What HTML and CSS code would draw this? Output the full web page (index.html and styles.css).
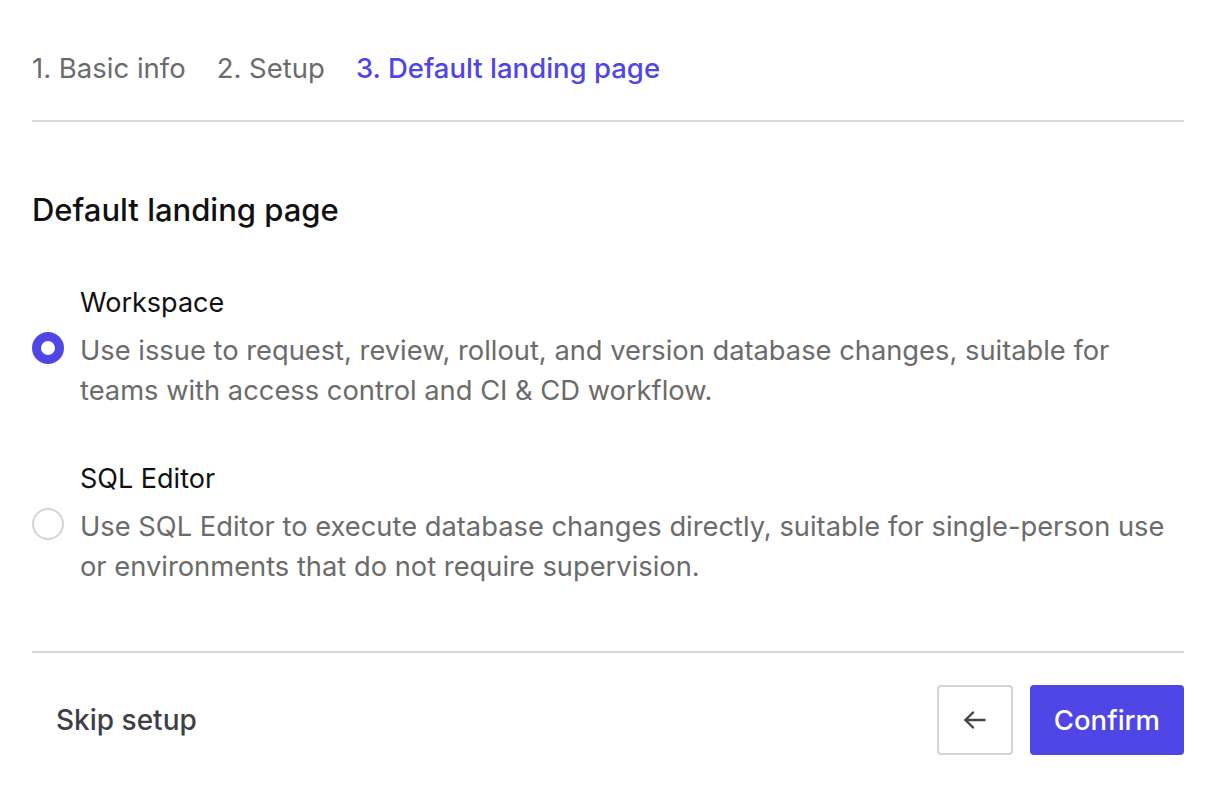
FILE: index.html
```html
<!DOCTYPE html>
<html lang="en">
<head>
  <meta charset="UTF-8">
  <title>Default landing page</title>
  <link rel="stylesheet" href="styles.css">
</head>
<body>
  <div class="wizard">
    <nav class="steps">
      <span class="step">1. Basic info</span>
      <span class="step">2. Setup</span>
      <span class="step active">3. Default landing page</span>
    </nav>

    <div class="content">
      <h2>Default landing page</h2>

      <label class="option">
        <span class="option-title">Workspace</span>
        <span class="option-row">
          <span class="radio checked"></span>
          <span class="option-desc">Use issue to request, review, rollout, and version database changes, suitable for teams with access control and CI &amp; CD workflow.</span>
        </span>
      </label>

      <label class="option">
        <span class="option-title">SQL Editor</span>
        <span class="option-row">
          <span class="radio"></span>
          <span class="option-desc">Use SQL Editor to execute database changes directly, suitable for single-person use or environments that do not require supervision.</span>
        </span>
      </label>
    </div>

    <div class="footer">
      <button class="btn-link">Skip setup</button>
      <div class="actions">
        <button class="btn-back" aria-label="Back">
          <svg width="22" height="18" viewBox="0 0 22 18" fill="none" stroke="#444" stroke-width="2.4" stroke-linecap="round" stroke-linejoin="round">
            <path d="M20.5 9H1.5"/>
            <path d="M9 1.5L1.5 9 9 16.5"/>
          </svg>
        </button>
        <button class="btn-primary">Confirm</button>
      </div>
    </div>
  </div>
</body>
</html>
```

FILE: styles.css
```css
* {
  box-sizing: border-box;
}

body {
  margin: 0;
  background: #fff;
  font-family: Inter, "Noto Sans", sans-serif;
  color: #111;
}

.wizard {
  padding: 0 32px;
}

.steps {
  display: flex;
  gap: 31px;
  padding-top: 49px;
  padding-bottom: 33px;
  border-bottom: 2px solid #d9d9d9;
}

.step {
  font-size: 27.5px;
  line-height: 38px;
  color: #6b6b6b;
}

.step.active {
  color: #4f46e5;
  font-weight: 500;
}

.content {
  padding-top: 68px;
  padding-bottom: 64px;
  border-bottom: 2px solid #d9d9d9;
}

h2 {
  margin: 0 0 53px;
  font-size: 31px;
  line-height: 40px;
  font-weight: 500;
  color: #111;
}

.option {
  display: block;
  margin-bottom: 48px;
}

.option:last-child {
  margin-bottom: 0;
}

.option-title {
  display: block;
  padding-left: 48px;
  font-size: 27px;
  line-height: 40px;
  color: #111;
  margin-bottom: 8px;
}

.option-row {
  display: flex;
  align-items: flex-start;
  gap: 16px;
}

.radio {
  flex: none;
  width: 32px;
  height: 32px;
  margin-top: 1px;
  border-radius: 50%;
  border: 2px solid #d4d4d4;
  background: #fff;
}

.radio.checked {
  border: 9px solid #4f46e5;
}

.option-desc {
  padding-right: 10px;
  font-size: 27.3px;
  line-height: 40px;
  color: #6b6b6b;
}

.footer {
  display: flex;
  justify-content: space-between;
  align-items: center;
  padding-top: 32px;
}

.btn-link {
  border: 0;
  background: none;
  padding: 0 24px;
  font-family: inherit;
  font-size: 28px;
  font-weight: 500;
  color: #3f3f46;
}

.actions {
  display: flex;
  gap: 17px;
}

.btn-back {
  width: 76px;
  height: 70px;
  border: 2px solid #d4d4d4;
  border-radius: 4px;
  background: #fff;
  display: flex;
  align-items: center;
  justify-content: center;
}

.btn-primary {
  height: 70px;
  padding: 0 24px;
  border: 0;
  border-radius: 4px;
  background: #4f46e5;
  color: #fff;
  font-family: inherit;
  font-size: 27.5px;
  font-weight: 500;
}
```
